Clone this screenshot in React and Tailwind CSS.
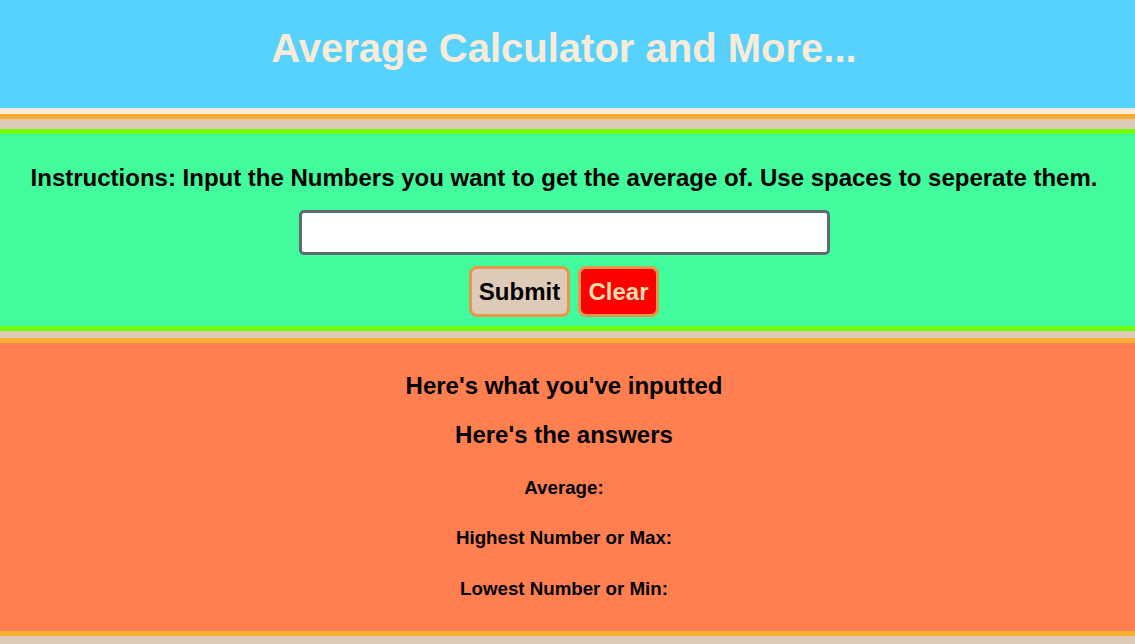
export default function App() {
  return (
    <div className="min-h-[644px] bg-[#decbb7] font-['Liberation_Sans',Arial,sans-serif]">
      {/* header */}
      <header className="h-[119px] bg-[#57d1fe] border-b-[11px] border-[#f9ae32] relative">
        <div className="h-[108px] flex items-center justify-center pb-[12px] pr-[7px]">
          <h1 className="text-[40px] font-bold text-[#faebd7]">Average Calculator and More...</h1>
        </div>
        <div className="absolute left-0 right-0 top-[108px] h-[6px] bg-[#faebd7]" />
      </header>

      {/* input section */}
      <section className="mt-[10px] bg-[#42fb9c] border-y-[5px] border-[#70ff0a] h-[202px] flex flex-col items-center pr-[7px]">
        <h3 className="mt-[32px] text-[24px] font-bold text-black leading-none">
          Instructions: Input the Numbers you want to get the average of. Use spaces to seperate them.
        </h3>
        <input
          type="text"
          className="mt-[20px] w-[531px] h-[45px] bg-white border-[3px] border-[#5f6a72] rounded-[5px]"
        />
        <div className="mt-[11px] flex gap-[8px]">
          <button className="w-[101px] h-[51px] bg-[#decbb7] border-[3px] border-[#e6984a] rounded-[8px] text-[24px] font-bold text-black">
            Submit
          </button>
          <button className="w-[81px] h-[51px] bg-[#ff0000] border-[3px] border-[#e6984a] rounded-[8px] text-[24px] font-bold text-[#ffdcb0]">
            Clear
          </button>
        </div>
      </section>

      {/* results */}
      <section className="mt-[7px] bg-[#ff7f50] border-y-[5px] border-[#f9ae32] h-[298px] flex flex-col items-center text-black pr-[7px]">
        <h3 className="mt-[31px] text-[24px] font-bold leading-none">Here's what you've inputted</h3>
        <h3 className="mt-[25px] text-[24px] font-bold leading-none">Here's the answers</h3>
        <p className="mt-[32px] text-[18.72px] font-bold leading-none">Average:</p>
        <p className="mt-[31px] text-[18.72px] font-bold leading-none">Highest Number or Max:</p>
        <p className="mt-[33px] text-[18.72px] font-bold leading-none">Lowest Number or Min:</p>
      </section>
    </div>
  );
}
